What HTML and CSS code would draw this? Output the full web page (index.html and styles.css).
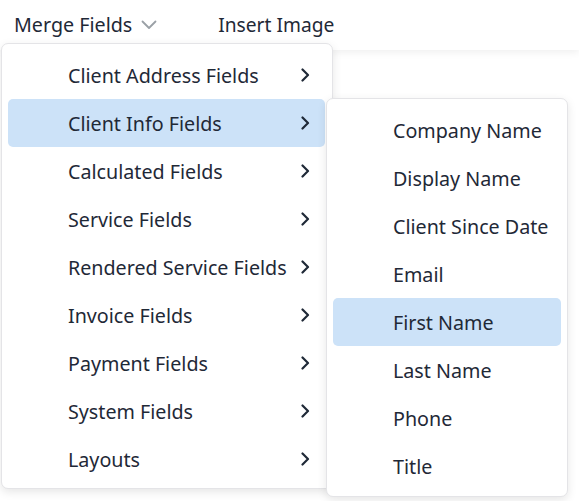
FILE: index.html
```html
<!DOCTYPE html>
<html>
<head>
<meta charset="utf-8">
<link rel="stylesheet" href="styles.css">
</head>
<body>
<div class="toolbar">
  <div class="tb-item">Merge Fields
    <svg class="caret" width="16" height="10" viewBox="0 0 16 10"><path d="M1.5 1.5 L8 8 L14.5 1.5" fill="none" stroke="#9aa0a6" stroke-width="1.8" stroke-linecap="round" stroke-linejoin="round"/></svg>
  </div>
  <div class="tb-item insert">Insert Image</div>
</div>
<div class="menu main">
  <div class="item"><span>Client Address Fields</span><svg class="chev" width="10" height="14" viewBox="0 0 10 14"><path d="M2.5 1.5 L8 7 L2.5 12.5" fill="none" stroke="#1f2937" stroke-width="2.2" stroke-linecap="round" stroke-linejoin="round"/></svg></div>
  <div class="item active"><span>Client Info Fields</span><svg class="chev" width="10" height="14" viewBox="0 0 10 14"><path d="M2.5 1.5 L8 7 L2.5 12.5" fill="none" stroke="#1f2937" stroke-width="2.2" stroke-linecap="round" stroke-linejoin="round"/></svg></div>
  <div class="item"><span>Calculated Fields</span><svg class="chev" width="10" height="14" viewBox="0 0 10 14"><path d="M2.5 1.5 L8 7 L2.5 12.5" fill="none" stroke="#1f2937" stroke-width="2.2" stroke-linecap="round" stroke-linejoin="round"/></svg></div>
  <div class="item"><span>Service Fields</span><svg class="chev" width="10" height="14" viewBox="0 0 10 14"><path d="M2.5 1.5 L8 7 L2.5 12.5" fill="none" stroke="#1f2937" stroke-width="2.2" stroke-linecap="round" stroke-linejoin="round"/></svg></div>
  <div class="item"><span>Rendered Service Fields</span><svg class="chev" width="10" height="14" viewBox="0 0 10 14"><path d="M2.5 1.5 L8 7 L2.5 12.5" fill="none" stroke="#1f2937" stroke-width="2.2" stroke-linecap="round" stroke-linejoin="round"/></svg></div>
  <div class="item"><span>Invoice Fields</span><svg class="chev" width="10" height="14" viewBox="0 0 10 14"><path d="M2.5 1.5 L8 7 L2.5 12.5" fill="none" stroke="#1f2937" stroke-width="2.2" stroke-linecap="round" stroke-linejoin="round"/></svg></div>
  <div class="item"><span>Payment Fields</span><svg class="chev" width="10" height="14" viewBox="0 0 10 14"><path d="M2.5 1.5 L8 7 L2.5 12.5" fill="none" stroke="#1f2937" stroke-width="2.2" stroke-linecap="round" stroke-linejoin="round"/></svg></div>
  <div class="item"><span>System Fields</span><svg class="chev" width="10" height="14" viewBox="0 0 10 14"><path d="M2.5 1.5 L8 7 L2.5 12.5" fill="none" stroke="#1f2937" stroke-width="2.2" stroke-linecap="round" stroke-linejoin="round"/></svg></div>
  <div class="item"><span>Layouts</span><svg class="chev" width="10" height="14" viewBox="0 0 10 14"><path d="M2.5 1.5 L8 7 L2.5 12.5" fill="none" stroke="#1f2937" stroke-width="2.2" stroke-linecap="round" stroke-linejoin="round"/></svg></div>
</div>
<div class="menu sub">
  <div class="item"><span>Company Name</span></div>
  <div class="item"><span>Display Name</span></div>
  <div class="item"><span>Client Since Date</span></div>
  <div class="item"><span>Email</span></div>
  <div class="item active"><span>First Name</span></div>
  <div class="item"><span>Last Name</span></div>
  <div class="item"><span>Phone</span></div>
  <div class="item"><span>Title</span></div>
</div>
</body>
</html>
```
FILE: styles.css
```css
html, body {
  margin: 0;
  padding: 0;
  background: #ffffff;
}
body {
  font-family: "Noto Sans", "Open Sans", sans-serif;
  color: #1f2937;
  width: 579px;
  height: 501px;
  overflow: hidden;
  position: relative;
}
.toolbar {
  height: 50px;
  background: #fff;
  box-shadow: 0 2px 8px rgba(0,0,0,0.07);
  display: flex;
  align-items: center;
  padding-left: 14px;
  font-size: 19.7px;
  position: relative;
  z-index: 1;
  white-space: nowrap;
}
.tb-item {
  display: flex;
  align-items: center;
  margin-top: -2px;
}
.caret {
  margin-left: 9px;
  margin-top: 1px;
}
.insert {
  margin-left: 61px;
  font-size: 19.2px;
}
.menu {
  position: absolute;
  background: #fff;
  border: 1px solid #e4e4e7;
  border-radius: 7px;
  box-shadow: 0 3px 10px rgba(0,0,0,0.10);
  box-sizing: border-box;
  z-index: 2;
}
.main {
  left: 1px;
  top: 43px;
  width: 332px;
  padding: 7px 7px 5px 6px;
}
.sub {
  left: 326px;
  top: 98px;
  width: 242px;
  padding: 7px 6px 6px 6px;
  z-index: 3;
}
.item {
  height: 48px;
  display: flex;
  align-items: center;
  justify-content: space-between;
  padding-left: 60px;
  padding-right: 15px;
  border-radius: 5px;
  font-size: 19.7px;
  white-space: nowrap;
}
.sub .item {
  padding-right: 0;
}
.item span {
  margin-top: 0;
}
.item.active {
  background: #cce2f8;
}
.chev {
  display: block;
}
```
